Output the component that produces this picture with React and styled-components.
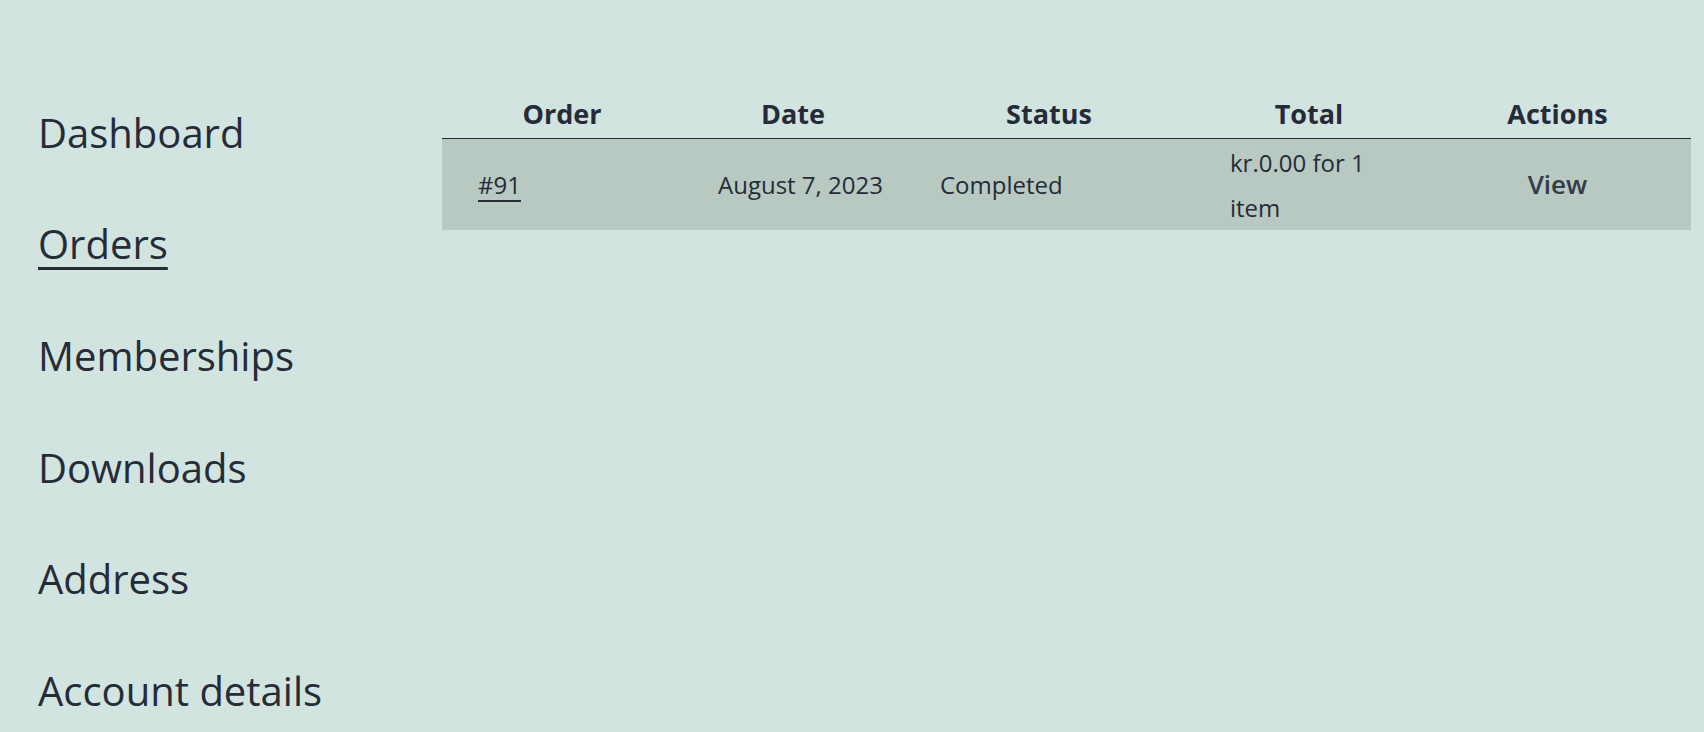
import React from "react";
import styled, { createGlobalStyle } from "styled-components";

const GlobalStyle = createGlobalStyle`
  body {
    margin: 0;
    background: #d2e4df;
    font-family: "Open Sans", "Noto Sans", sans-serif;
    color: #262b38;
  }
`;

const navItems = ["Dashboard", "Orders", "Memberships", "Downloads", "Address", "Account details"];

const orders = [
  { id: "#91", date: "August 7, 2023", status: "Completed", total: "kr.0.00 for 1 item" },
];

export default function App() {
  return (
    <>
      <GlobalStyle />
      <Page>
        <Nav>
          {navItems.map((item) => (
            <NavLink key={item} href="#" $active={item === "Orders"}>
              {item}
            </NavLink>
          ))}
        </Nav>
        <Main>
          <Table>
            <colgroup>
              <col style={{ width: 240 }} />
              <col style={{ width: 222 }} />
              <col style={{ width: 290 }} />
              <col style={{ width: 230 }} />
              <col style={{ width: 267 }} />
            </colgroup>
            <thead>
              <tr>
                <Th>Order</Th>
                <Th>Date</Th>
                <Th>Status</Th>
                <Th>Total</Th>
                <Th>Actions</Th>
              </tr>
            </thead>
            <tbody>
              {orders.map((o) => (
                <Row key={o.id}>
                  <Td>
                    <OrderLink href="#">{o.id}</OrderLink>
                  </Td>
                  <Td $nowrap>{o.date}</Td>
                  <Td>{o.status}</Td>
                  <Td>{o.total}</Td>
                  <ActionTd>
                    <ViewLink href="#">View</ViewLink>
                  </ActionTd>
                </Row>
              ))}
            </tbody>
          </Table>
        </Main>
      </Page>
    </>
  );
}

const Page = styled.div`
  display: flex;
  min-height: 732px;
`;

const Nav = styled.nav`
  width: 442px;
  padding: 77px 0 0 38px;
  box-sizing: border-box;
  display: flex;
  flex-direction: column;
  flex-shrink: 0;
`;

const NavLink = styled.a`
  display: block;
  align-self: flex-start;
  padding: 25.8px 0;
  font-size: 40px;
  line-height: 60px;
  color: #262b38;
  text-decoration: ${(p) => (p.$active ? "underline" : "none")};
  text-decoration-thickness: 3px;
  text-underline-offset: 8px;
`;

const Main = styled.main`
  flex: 1;
  padding: 88px 13px 0 0;
`;

const Table = styled.table`
  width: 1249px;
  border-collapse: collapse;
  table-layout: fixed;
`;

const Th = styled.th`
  height: 50px;
  padding: 0;
  font-size: 27px;
  font-weight: 700;
  text-align: center;
  vertical-align: middle;
  border-bottom: 1px solid #262b38;
`;

const Row = styled.tr`
  background: #b7c9c1;
`;

const Td = styled.td`
  padding: 0.5px 36px 0.5px 36px;
  font-size: 24px;
  line-height: 45px;
  vertical-align: middle;
  text-align: left;
  white-space: ${(p) => (p.$nowrap ? "nowrap" : "normal")};
`;

const ActionTd = styled(Td)`
  padding: 0;
  text-align: center;
`;

const OrderLink = styled.a`
  color: #262b38;
  text-decoration: underline;
  text-decoration-thickness: 2px;
  text-underline-offset: 6px;
`;

const ViewLink = styled.a`
  color: #343a46;
  font-size: 26px;
  font-weight: 600;
  text-decoration: none;
`;
